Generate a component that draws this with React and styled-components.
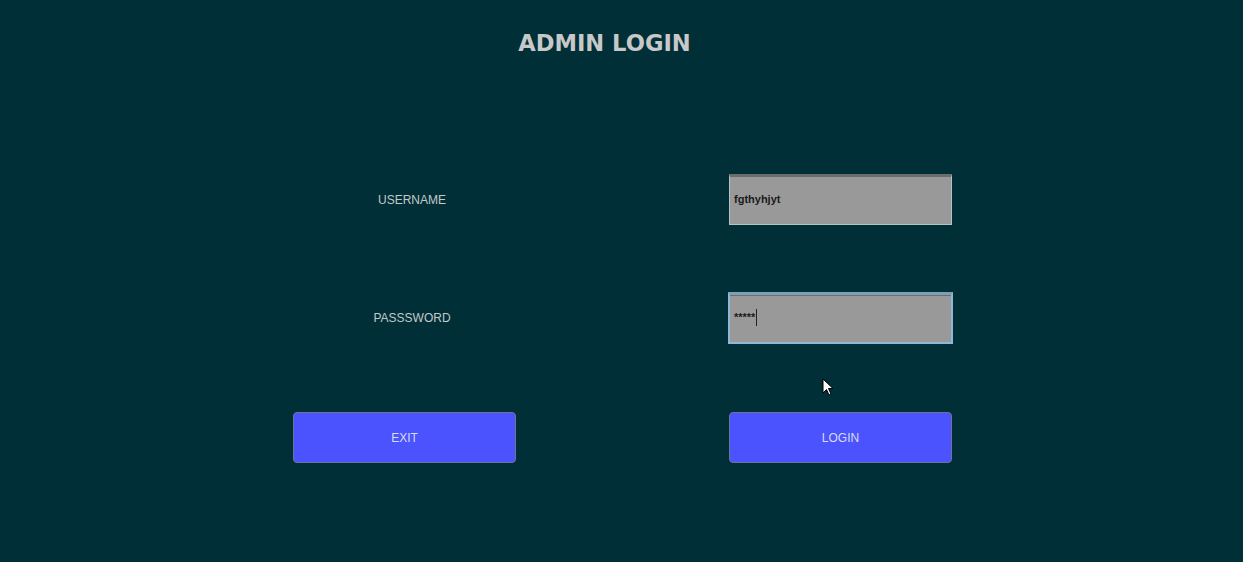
import React from 'react';
import styled, { createGlobalStyle, css } from 'styled-components';

const GlobalStyle = createGlobalStyle`
  html, body {
    margin: 0;
    padding: 0;
    background: #012f37;
  }
`;

const Screen = styled.div`
  position: relative;
  width: 1243px;
  height: 562px;
  background: #012f37;
  font-family: "Liberation Sans", Arial, sans-serif;
  overflow: hidden;
`;

const Title = styled.h1`
  margin: 0;
  padding: 29px 34px 0 0;
  text-align: center;
  font-family: "DejaVu Sans", Verdana, sans-serif;
  font-weight: bold;
  font-size: 22.6px;
  line-height: 28px;
  color: #c6c9c8;
`;

const Form = styled.div`
  display: grid;
  grid-template-columns: 223px 223px;
  column-gap: 213px;
  row-gap: 67px;
  width: 659px;
  margin: 117px 0 0 293px;
`;

const Label = styled.div`
  display: flex;
  align-items: center;
  justify-content: center;
  padding-left: 15px;
  height: 51px;
  font-size: 12px;
  color: #c2c9c9;
`;

const Field = styled.div`
  display: flex;
  align-items: center;
  box-sizing: border-box;
  height: 51px;
  padding: 0 0 3px 4px;
  background: #999999;
  border: 1px solid #b5c2c4;
  border-top: 3px solid #6a6e6e;
  font-size: 11px;
  font-weight: bold;
  color: #1b1b1b;
  ${({ focused }) => focused && css`
    height: 52px;
    margin: 0 -1px;
    border: 2px solid #8fb7d6;
    border-top: 3px solid #7e9fb8;
    box-shadow: inset 0 1px 0 #6a6e6e;
  `}
`;

const Caret = styled.span`
  display: inline-block;
  width: 1px;
  height: 17px;
  margin-left: 1px;
  background: #222;
`;

const Button = styled.button`
  box-sizing: border-box;
  height: 51px;
  margin-top: 1px;
  border: 1px solid #6c7497;
  border-radius: 4px;
  background: #4a53fd;
  color: #d8dbf5;
  font-family: "Liberation Sans", Arial, sans-serif;
  font-size: 12px;
  cursor: pointer;
`;

const Pointer = styled.svg`
  position: absolute;
  left: 822px;
  top: 378px;
`;

export default function App() {
  return (
    <Screen>
      <GlobalStyle />
      <Title>ADMIN LOGIN</Title>
      <Form>
        <Label>USERNAME</Label>
        <Field>fgthyhjyt</Field>
        <Label>PASSSWORD</Label>
        <Field focused>*****<Caret /></Field>
        <Button>EXIT</Button>
        <Button>LOGIN</Button>
      </Form>
      <Pointer width="14" height="20" viewBox="0 0 14 20">
        <path d="M1 1 L1 15 L4.5 11.5 L7 17 L9 16 L6.5 10.5 L11 10.5 Z" fill="#fff" stroke="#000" strokeWidth="1" />
      </Pointer>
    </Screen>
  );
}
